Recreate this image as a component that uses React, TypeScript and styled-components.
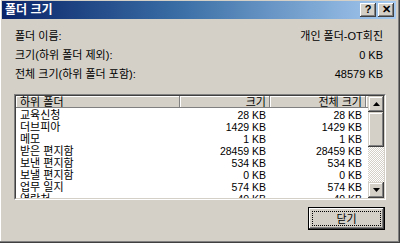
import React from 'react';
import styled, { createGlobalStyle } from 'styled-components';

const GlobalStyle = createGlobalStyle`
  html, body {
    margin: 0;
    padding: 0;
    width: 400px;
    height: 243px;
    overflow: hidden;
    background: #d4d0c8;
  }
`;

const FONT = `"Liberation Sans", "Noto Sans CJK KR", sans-serif`;

const Window = styled.div`
  box-sizing: border-box;
  width: 400px;
  height: 243px;
  padding: 1px 3px 2px 2px;
  background: #d4d0c8;
  border-right: 1px solid #404040;
  border-bottom: 1px solid #404040;
  box-shadow: inset -1px -1px 0 #808080, inset 1px 0 0 #ffffff;
  display: flex;
  flex-direction: column;
  font-family: ${FONT};
  font-size: 11px;
  color: #000;
`;

const TitleBar = styled.div`
  height: 18px;
  display: flex;
  align-items: center;
  justify-content: space-between;
  padding: 0 2px 0 3px;
  background: linear-gradient(90deg, #0a246a 0%, #3a6ea5 45%, #a6caf0 100%);
`;

const Title = styled.span`
  color: #fff;
  font-weight: bold;
  font-size: 12px;
  line-height: 14px;
`;

const TitleButtons = styled.div`
  display: flex;
  gap: 2px;
`;

const CapButton = styled.div`
  box-sizing: border-box;
  width: 16px;
  height: 14px;
  background: #d4d0c8;
  box-shadow: inset -1px -1px 0 #404040, inset 1px 1px 0 #ffffff,
    inset -2px -2px 0 #808080;
  display: flex;
  align-items: center;
  justify-content: center;
  font-weight: bold;
  font-size: 11px;
  line-height: 11px;
  padding-bottom: 1px;
`;

const Body = styled.div`
  flex: 1;
  display: flex;
  flex-direction: column;
  padding: 11px 10px 0 12px;
`;

const InfoGrid = styled.div`
  display: grid;
  grid-template-columns: 1fr auto;
  row-gap: 6px;
  padding-left: 1px;
  padding-right: 3px;
`;

const Info = styled.span<{ $right?: boolean }>`
  line-height: 13px;
  text-align: ${(p) => (p.$right ? 'right' : 'left')};
`;

const ListBox = styled.div`
  margin-top: 13px;
  height: 106px;
  box-sizing: border-box;
  border-top: 1px solid #808080;
  border-left: 1px solid #808080;
  border-right: 1px solid #ffffff;
  border-bottom: 1px solid #ffffff;
  display: flex;
`;

const ListInner = styled.div`
  flex: 1;
  display: flex;
  border-top: 1px solid #404040;
  border-left: 1px solid #404040;
  border-right: 1px solid #d4d0c8;
  border-bottom: 1px solid #d4d0c8;
  background: #fff;
  overflow: hidden;
`;

const Table = styled.div`
  flex: 1;
  display: flex;
  flex-direction: column;
  overflow: hidden;
`;

const COLS = '164px 90px 96px 1fr';

const HeaderRow = styled.div`
  display: grid;
  grid-template-columns: ${COLS};
  height: 12px;
  margin-bottom: 1px;
`;

const HeaderCell = styled.div<{ $right?: boolean }>`
  box-sizing: border-box;
  background: #d4d0c8;
  box-shadow: inset -1px -1px 0 #808080, inset 1px 1px 0 #ffffff;
  line-height: 12px;
  padding: 0 4px 0 4px;
  text-align: ${(p) => (p.$right ? 'right' : 'left')};
  white-space: nowrap;
  overflow: hidden;
`;

const Row = styled.div`
  display: grid;
  grid-template-columns: ${COLS};
  height: 12px;
  line-height: 12px;
  white-space: nowrap;
`;

const Cell = styled.div<{ $right?: boolean }>`
  padding: ${(p) => (p.$right ? '0 4px 0 0' : '0 0 0 4px')};
  text-align: ${(p) => (p.$right ? 'right' : 'left')};
  font-size: ${(p) => (p.$right ? '10.5px' : '11px')};
  overflow: hidden;
`;

const ScrollBar = styled.div`
  width: 16px;
  display: flex;
  flex-direction: column;
  background: repeating-conic-gradient(#d4d0c8 0 25%, #ffffff 0 50%) 0 0 / 2px 2px;
`;

const ScrollButton = styled.div`
  box-sizing: border-box;
  height: 16px;
  background: #d4d0c8;
  box-shadow: inset -1px -1px 0 #404040, inset 1px 1px 0 #d4d0c8,
    inset -2px -2px 0 #808080, inset 2px 2px 0 #ffffff;
  display: flex;
  align-items: center;
  justify-content: center;
`;

const Thumb = styled(ScrollButton)`
  height: 35px;
`;

const Track = styled.div`
  flex: 1;
`;

const Footer = styled.div`
  display: flex;
  justify-content: flex-end;
  padding: 7px 1px 0 0;
`;

const DefaultButton = styled.div`
  box-sizing: border-box;
  width: 77px;
  height: 23px;
  border: 1px solid #000;
  background: #d4d0c8;
  box-shadow: inset -1px -1px 0 #404040, inset 1px 1px 0 #ffffff,
    inset -2px -2px 0 #808080;
  display: flex;
  padding: 3px;
`;

const FocusRect = styled.div`
  flex: 1;
  border: 1px dotted #000;
  display: flex;
  align-items: center;
  justify-content: center;
  line-height: 12px;
`;

const Arrow = ({ up }: { up?: boolean }) => (
  <svg width="7" height="4" viewBox="0 0 7 4">
    <path d={up ? 'M3.5 0 L7 4 L0 4 Z' : 'M0 0 L7 0 L3.5 4 Z'} fill="#000" />
  </svg>
);

const rows = [
  ['교육신청', '28 KB', '28 KB'],
  ['더브피아', '1429 KB', '1429 KB'],
  ['메모', '1 KB', '1 KB'],
  ['받은 편지함', '28459 KB', '28459 KB'],
  ['보낸 편지함', '534 KB', '534 KB'],
  ['보낼 편지함', '0 KB', '0 KB'],
  ['업무 일지', '574 KB', '574 KB'],
  ['연락처', '40 KB', '40 KB'],
];

export default function App() {
  return (
    <>
      <GlobalStyle />
      <Window>
        <TitleBar>
          <Title>폴더 크기</Title>
          <TitleButtons>
            <CapButton>?</CapButton>
            <CapButton>✕</CapButton>
          </TitleButtons>
        </TitleBar>
        <Body>
          <InfoGrid>
            <Info>폴더 이름:</Info>
            <Info $right>개인 폴더-OT회진</Info>
            <Info>크기(하위 폴더 제외):</Info>
            <Info $right>0 KB</Info>
            <Info>전체 크기(하위 폴더 포함):</Info>
            <Info $right>48579 KB</Info>
          </InfoGrid>
          <ListBox>
            <ListInner>
              <Table>
                <HeaderRow>
                  <HeaderCell>하위 폴더</HeaderCell>
                  <HeaderCell $right>크기</HeaderCell>
                  <HeaderCell $right>전체 크기</HeaderCell>
                  <HeaderCell />
                </HeaderRow>
                {rows.map(([name, size, total]) => (
                  <Row key={name}>
                    <Cell>{name}</Cell>
                    <Cell $right>{size}</Cell>
                    <Cell $right>{total}</Cell>
                    <Cell />
                  </Row>
                ))}
              </Table>
              <ScrollBar>
                <ScrollButton>
                  <Arrow up />
                </ScrollButton>
                <Thumb />
                <Track />
                <ScrollButton>
                  <Arrow />
                </ScrollButton>
              </ScrollBar>
            </ListInner>
          </ListBox>
          <Footer>
            <DefaultButton>
              <FocusRect>닫기</FocusRect>
            </DefaultButton>
          </Footer>
        </Body>
      </Window>
    </>
  );
}
